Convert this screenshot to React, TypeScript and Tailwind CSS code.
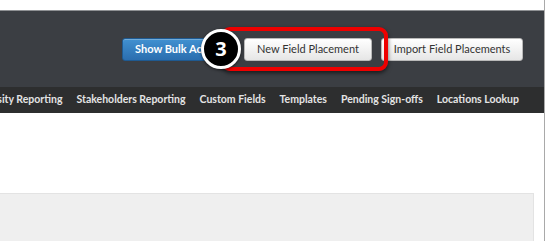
import React from "react";

const navItems = [
  "Diversity Reporting",
  "Stakeholders Reporting",
  "Custom Fields",
  "Templates",
  "Pending Sign-offs",
  "Locations Lookup",
];

export default function App() {
  return (
    <div className="relative w-[545px] h-[241px] overflow-hidden bg-white border-r border-[#a9a9a9] font-['Lato',sans-serif]">
      <div className="h-[11px] bg-white border-b border-[#8f9194]" />
      <div className="h-[76px] bg-[#3b3e43] flex items-center justify-end pr-[21px]">
        <button className="w-[112px] h-[23px] rounded-[3px] border border-[#1f5a91] bg-gradient-to-b from-[#4191d1] to-[#2b6eaf] text-white text-[11px] font-bold text-left pl-[12px] whitespace-nowrap shadow-[inset_0_1px_0_rgba(255,255,255,0.25)]">
          Show Bulk Actions
        </button>
        <button className="ml-[10px] w-[128px] h-[23px] rounded-[3px] border border-[#b9b9b9] bg-gradient-to-b from-white to-[#e6e6e6] text-[#333] text-[11px] whitespace-nowrap">
          New Field Placement
        </button>
        <button className="ml-[9px] w-[142px] h-[23px] rounded-[3px] border border-[#b9b9b9] bg-gradient-to-b from-white to-[#e6e6e6] text-[#333] text-[11px] whitespace-nowrap">
          Import Field Placements
        </button>
      </div>
      <div className="h-[26px] bg-[#2d2e2f] flex items-center justify-end overflow-hidden pr-[25px] gap-[14px]">
        {navItems.map((t) => (
          <span key={t} className="shrink-0 whitespace-nowrap text-[10.5px] font-bold text-[#e4e4e4]">
            {t}
          </span>
        ))}
      </div>
      <div className="h-[80px]" />
      <div className="w-[534px] h-[60px] bg-[#efefef] border border-[#e3e3e3] border-l-0" />

      {/* red highlight */}
      <div className="absolute left-[221px] top-[27px] w-[167px] h-[44px] rounded-[9px] border-[4px] border-[#ee0000] shadow-[0_2px_4px_rgba(0,0,0,0.6)]" />
      {/* step circle */}
      <div className="absolute left-[201px] top-[29px] w-[40px] h-[40px] rounded-full bg-black border-[3px] border-white flex items-center justify-center text-white text-[20px] font-bold font-['Open_Sans',sans-serif] shadow-[0_1px_3px_rgba(0,0,0,0.6)]">
        3
      </div>
    </div>
  );
}
